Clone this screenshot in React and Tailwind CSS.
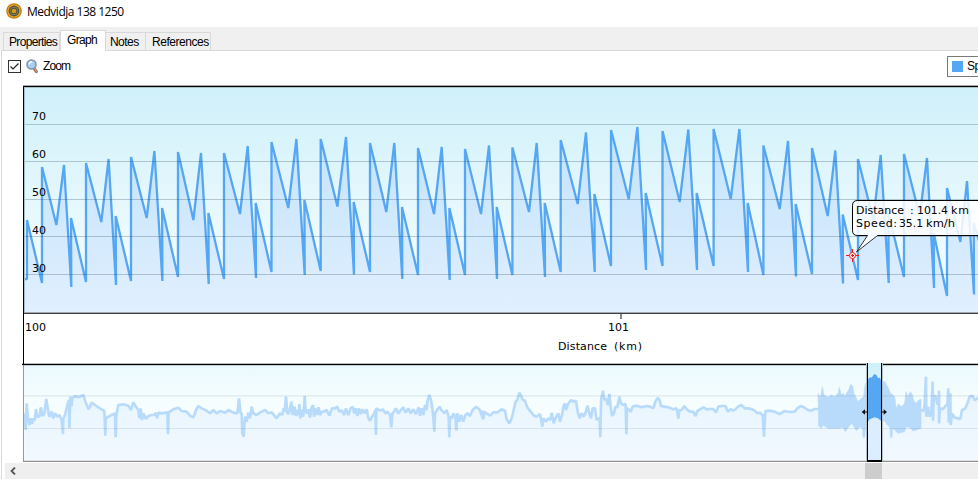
import React, { useState } from 'react';

const TABS = ['Properties', 'Graph', 'Notes', 'References'];

// x, bottom, top, midX, midY, peakX, peakY, dropX, dropY, riseY
const CYCLES = [
  [42, 283, 167, 56.4, 225, 64, 165, 71.3, 287, 218],
  [86, 282, 163, 101.3, 222, 108.6, 159, 116, 285, 216],
  [131, 281, 157, 146.7, 218, 154.4, 151, 162.4, 281, 208],
  [178, 277, 152, 193.4, 220, 201, 153, 208.7, 284, 213],
  [224, 279, 153, 240, 214, 247.7, 146, 256, 278, 203],
  [271.5, 272, 142, 288.3, 208, 296.4, 139, 304.7, 275, 200],
  [320.7, 271, 139, 337.4, 206.5, 346, 137, 354, 274.5, 202],
  [370, 272, 143, 386.3, 212, 394.3, 143, 402.3, 279, 207],
  [418, 275, 148, 434, 214, 441.7, 147, 449.7, 280, 208],
  [465, 275, 149, 481, 214, 489, 145.5, 497, 279, 207],
  [512.4, 275, 147.5, 529, 212, 536.7, 143, 545, 277, 203],
  [560.7, 272, 140, 577.7, 204, 586, 132.5, 594.7, 272, 194],
  [611, 266, 130, 628.7, 199, 637.4, 127, 646, 270, 193],
  [662.5, 266, 131, 679.7, 202, 688.3, 129.5, 697, 270, 193],
  [713.6, 266, 129, 730.7, 199, 739.4, 129, 748, 272, 203],
  [763.4, 275, 145.5, 779.7, 209, 788, 141, 796, 276.5, 204],
  [812, 274, 148, 827.7, 216, 835.3, 150.5, 843, 283.5, 214.5],
  [858, 280, 159, 873.3, 220, 880.7, 155, 888.7, 283, 213],
  [904, 277, 154, 919.7, 216, 927, 158, 934, 288, 233],
  [947, 296, 188, 960.4, 242, 967, 181, 974, 294.5, 223],
];

const speedLine =
  '23,279 27,279 27,220 ' +
  CYCLES.map(([x, yb, yt, mx, my, px, py, dx, dy, ry]) =>
    `${x},${yb} ${x},${yt} ${mx},${my} ${px},${py} ${dx},${dy} ${dx - 0.3},${ry}`
  ).join(' ') +
  ' 980,244';

// overview samples, three units per pixel
const OVERVIEW = [
  { start: 0, points: '73,190 77,240 80,160 84,205 88,225 92,205 96,222 100,205 104,212 108,178 112,200 118,200 123,172 127,198 133,190 139,147 143,175 148,200 155,185 160,205 165,190 172,200 178,195 185,210 189,252 190,205 195,195 202,165 207,150 208,235 211,140 214,170 217,145 225,138 235,142 250,135 256,155 266,178 275,158 285,165 300,175 313,183 316,257 317,205 325,200 335,195 345,190 347,262 349,195 355,165 370,163 385,167 393,180 400,157 408,170 415,180 418,205 422,175 426,210 430,190 438,207 445,198 455,195 463,195 468,188 471,205 476,188 485,190 502,187 504,253 506,187 520,178 535,173 545,183 560,185 570,197 580,203 588,180 595,168 605,175 620,182 630,190 640,180 650,190 660,183 675,188 685,180 700,188 712,190 717,145 722,190 725,190 727,250 731,260 735,200 740,215 745,188' },
  { start: 720, points: '24,190 30,205 35,170 40,190 50,195 60,188 75,180 85,190 95,187 110,205 120,190 127,195 131,175 134,185 138,140 142,190 147,190 154,155 158,195 164,170 168,198 172,180 176,195 178,162 181,205 185,178 190,200 194,138 197,185 202,190 206,178 210,203 214,175 219,165 222,200 226,175 231,195 236,172 240,195 246,185 252,185 260,180 268,197 276,175 285,175 292,170 298,185 305,180 312,195 318,175 325,195 332,175 338,170 343,190 347,175 352,198 357,175 362,192 368,178 373,190 380,178 385,205 390,212 396,200 402,192 406,180 408,255 409,175 420,182 428,178 436,190 443,185 450,195 454,232 457,190 462,185 468,175 475,190 483,180 490,172 497,188 505,175 512,190 520,178 528,192 536,172 540,197 545,175 550,195 555,165 560,180 562,155 568,135 573,150 578,182 583,245 585,190 591,180 598,170 606,182 613,190 620,180 626,200 628,262 630,200 636,205 640,190 646,200 649,242 652,190 658,215 663,195 670,215 676,195 683,190 690,198 698,180 708,170 718,178 725,190 730,208 733,188' },
  { start: 1440, points: '0,182 5,195 9,207 11,185 20,190 30,197 40,187 52,187 65,178 75,182 80,208 88,220 95,205 101,180 107,155 112,150 118,128 124,140 129,150 135,152 142,172 152,185 162,197 170,200 180,192 187,230 190,205 198,215 205,205 211,210 215,188 221,220 226,205 235,190 240,215 246,195 250,170 255,160 258,180 265,160 274,150 280,155 288,152 293,185 299,205 305,190 311,200 318,185 323,167 328,190 333,205 338,175 345,175 350,210 356,205 359,205 361,262 363,150 369,122 373,150 378,145 384,165 388,132 392,170 396,198 402,190 406,170 412,172 418,140 423,160 430,165 437,162 439,253 441,175 446,178 452,185 458,170 470,167 485,172 500,168 510,170 520,175 526,155 533,144 539,150 543,168 555,170 565,172 580,178 590,175 595,206 598,180 605,180 613,168 620,178 630,185 640,185 647,198 652,183 660,178 670,172 680,178 690,177 700,177 708,187 715,170 725,168 737,168 743,185' },
  { start: 2184, points: '8,177 15,182 22,178 30,170 40,165 50,175 60,175 70,177 80,182 88,190 95,188 104,195 108,260 112,183 125,182 140,185 155,192 170,183 185,186 200,185 208,175 218,168 228,172 240,180 250,182 260,177 272,177 580,180 587,183 590,160 594,80 595,200 600,170 605,200 610,190 614,95 615,212 617,140 622,137 628,160 632,165 633,122 633,220 636,175 645,178 652,168 658,165 661,115 662,218 667,130 668,225 672,190 680,203 690,205 697,207 702,180 712,175 720,155 725,140 733,137 740,150 755,142' },
];

const shift = (points, dx) =>
  points.split(' ').map((p) => {
    const [x, y] = p.split(',').map(Number);
    return `${x + dx},${y}`;
  }).join(' ');

const overviewLine = OVERVIEW.map((s) => shift(s.points, s.start)).join(' ');

const denseBand = shift(
  '270,130 275,140 279,135 283,110 288,135 300,142 310,135 320,140 330,130 334,112 340,135 346,130 350,140 358,125 362,120 368,103 374,108 377,130 383,140 390,155 400,145 407,140 410,110 415,95 420,88 424,83 432,82 436,75 440,72 446,76 450,84 456,83 460,93 470,95 480,112 488,130 500,140 505,175 512,162 520,170 530,160 534,125 540,140 547,125 553,135 558,155 565,160 572,150 579,148 579,235 565,240 555,243 545,232 534,230 530,245 510,250 500,240 494,235 492,262 487,262 486,232 478,225 470,213 460,213 450,205 440,202 425,208 417,218 413,230 410,262 405,262 404,235 395,230 385,242 372,220 362,230 352,245 345,232 335,235 300,235 285,225 280,235 272,228',
  2184
);

function AppIcon() {
  return (
    <svg width="16" height="16" viewBox="0 0 16 16">
      <circle cx="8" cy="8" r="7.8" fill="#c07a12" />
      <circle cx="8" cy="8" r="6.6" fill="#f2a51f" />
      <circle cx="8" cy="8" r="5.4" fill="#4f5648" />
      <circle cx="8" cy="8" r="3.9" fill="#8d8a5c" />
      <circle cx="8" cy="8" r="3.2" fill="#4c5242" />
      <circle cx="8" cy="8" r="2.3" fill="#d99a16" />
    </svg>
  );
}

function LensIcon() {
  return (
    <svg width="13" height="15" viewBox="0 0 13 15">
      <path d="M7.5 8.5 L10.4 12.6" stroke="#9a6a48" strokeWidth="3" strokeLinecap="round" />
      <path d="M8.2 9 L10.4 12.2" stroke="#d2a27e" strokeWidth="1.2" strokeLinecap="round" />
      <circle cx="5.5" cy="5.5" r="4.5" fill="#a9d0f2" stroke="#8793a5" strokeWidth="1.6" />
      <path d="M3.2 5.5a2.5 2.5 0 0 1 2.8-2.6" stroke="#f4fbff" strokeWidth="1.6" fill="none" />
    </svg>
  );
}

function SpeedChart() {
  return (
    <svg className="block" width="978" height="279" viewBox="0 84 978 279" fontFamily="'DejaVu Sans', sans-serif" fontSize="11">
      <defs>
        <linearGradient id="sky" x1="0" y1="0" x2="0" y2="1">
          <stop offset="0" stopColor="#cff0fa" />
          <stop offset="1" stopColor="#fbffff" />
        </linearGradient>
        <linearGradient id="area" gradientUnits="userSpaceOnUse" x1="0" y1="127" x2="0" y2="313">
          <stop offset="0" stopColor="#c2e3fb" />
          <stop offset="1" stopColor="#e1efff" />
        </linearGradient>
      </defs>
      <rect x="24" y="87" width="954" height="226" fill="url(#sky)" />
      <polygon points={`23,313 ${speedLine} 980,313`} fill="url(#area)" />
      <polyline points={speedLine} fill="none" stroke="#55a6f3" strokeWidth="2.3" strokeLinejoin="bevel" />
      {[124, 161, 199, 236, 274].map((y) => (
        <rect key={y} x="24" y={y} width="954" height="1" fill="#16384a" opacity="0.25" />
      ))}
      <rect x="23" y="85" width="955" height="1" fill="#a3aaa8" />
      <rect x="23" y="86" width="955" height="1" fill="#000" />
      <rect x="24" y="87" width="954" height="1" fill="#a7c1c8" />
      <rect x="23" y="86" width="1" height="277" fill="#000" />
      <rect x="24" y="87" width="1" height="226" fill="#a5c2cb" />
      <rect x="24" y="312" width="954" height="1" fill="#a3a9b2" />
      <rect x="24" y="313" width="954" height="1" fill="#404040" />
      <rect x="620" y="314" width="2" height="5" fill="#8a8a8a" />
      {[[70, 120], [60, 158], [50, 196], [40, 234], [30, 272]].map(([v, y]) => (
        <text key={v} x="32" y={y} textLength="14" lengthAdjust="spacingAndGlyphs">{v}</text>
      ))}
      <text x="25" y="331" textLength="21" lengthAdjust="spacingAndGlyphs">100</text>
      <text x="608" y="331" textLength="21" lengthAdjust="spacingAndGlyphs">101</text>
      <text x="558" y="350" textLength="49">Distance</text>
      <text x="614" y="350" textLength="28">(km)</text>

      {/* hovered sample */}
      <path
        d="M984 200.5 H857.5 Q852.5 200.5 852.5 205.5 V230.5 Q852.5 235.5 857.5 235.5 H984"
        fill="#fff" fillOpacity="0.85" stroke="#000"
      />
      <path d="M867.5 235.5 L856.5 252 L877.5 235.5" fill="#fbfdff" stroke="#333" />
      <rect x="868" y="235" width="9" height="1" fill="#f6fafe" />
      <text x="856" y="214" textLength="48">Distance</text>
      <text x="910" y="214">:</text>
      <text x="917" y="214" textLength="31" lengthAdjust="spacingAndGlyphs">101.4</text>
      <text x="951" y="214" textLength="18">km</text>
      <text x="856" y="227" textLength="41">Speed:</text>
      <text x="899" y="227" textLength="24" lengthAdjust="spacingAndGlyphs">35.1</text>
      <text x="926" y="227" textLength="29" lengthAdjust="spacingAndGlyphs">km/h</text>
      <g stroke="#f31616">
        <circle cx="852.5" cy="255.5" r="3" fill="#fff" />
        <path d="M846 255.5h3.5 M855.5 255.5h3.5 M852.5 249v3.5 M852.5 258.5v3.5 M851 255.5h3 M852.5 254v3" />
      </g>
    </svg>
  );
}

function OverviewChart() {
  return (
    <svg className="block" width="978" height="100" viewBox="0 39 2934 300">
      <defs>
        <linearGradient id="faded" x1="0" y1="0" x2="0" y2="1">
          <stop offset="0" stopColor="#ebf9fe" />
          <stop offset="0.5" stopColor="#f8feff" />
          <stop offset="1" stopColor="#fbffff" />
        </linearGradient>
        <linearGradient id="fadedArea" gradientUnits="userSpaceOnUse" x1="0" y1="120" x2="0" y2="330">
          <stop offset="0" stopColor="#e7f5fe" />
          <stop offset="1" stopColor="#f2f8ff" />
        </linearGradient>
        <clipPath id="selected">
          <rect x="2604" y="42" width="39" height="288" />
        </clipPath>
      </defs>
      <rect x="72" y="45" width="2862" height="288" fill="url(#faded)" />
      <polygon points={`73,330 ${overviewLine} 2939,330`} fill="url(#fadedArea)" />
      <polyline points={overviewLine} fill="none" stroke="#b9dbfb" strokeWidth="8" strokeLinejoin="bevel" />
      <polygon points={denseBand} fill="#b9dbfb" stroke="#b9dbfb" strokeWidth="2" />
      <rect x="72" y="135" width="2862" height="5" fill="#16384a" opacity="0.07" />
      <rect x="72" y="234" width="2862" height="3" fill="#16384a" opacity="0.1" />
      <rect x="66" y="39" width="2868" height="3" fill="#b9bcbc" />
      <rect x="66" y="42" width="2868" height="3" fill="#000" />
      <rect x="69" y="39" width="3" height="3" fill="#000" />
      <rect x="72" y="45" width="2862" height="3" fill="#c3cbcd" />
      <rect x="69" y="45" width="3" height="291" fill="#999" />
      <rect x="72" y="330" width="2862" height="3" fill="#dce1e6" />
      <rect x="69" y="333" width="2865" height="3" fill="#8f8f8f" />

      {/* selected window */}
      <rect x="2598" y="39" width="51" height="294" fill="#b7c1c5" />
      <rect x="2604" y="39" width="39" height="291" fill="url(#sky)" />
      <g clipPath="url(#selected)">
        <rect x="2604" y="190" width="39" height="140" fill="#dbedff" />
        <polygon points={denseBand} fill="#55a6f3" />
      </g>
      <rect x="2601" y="39" width="3" height="297" fill="#000" />
      <rect x="2643" y="39" width="3" height="297" fill="#000" />
      <rect x="2601" y="330" width="45" height="6" fill="#000" />
      <path d="M2601 186h-9 M2646 186h9" stroke="#111" strokeWidth="3" />
      <path d="M2585 186l10-8v16z M2661 186l-10-8v16z" fill="#111" />
    </svg>
  );
}

export default function App() {
  const [active, setActive] = useState('Graph');
  const [zoom, setZoom] = useState(true);

  const tabStyles = {
    Properties: 'w-[57px] border-l pl-[5px] tracking-[-0.65px]',
    Graph: 'w-[46px] pl-[6px] tracking-[-0.65px]',
    Notes: 'w-[40px] pl-[4px] tracking-[-0.55px]',
    References: 'w-[65px] pl-[6px] tracking-[-0.45px]',
  };

  return (
    <div className="flex h-[481px] w-[978px] flex-col overflow-hidden bg-white font-['Liberation_Sans',sans-serif] text-black">
      <header className="flex h-[27px] shrink-0 items-start gap-[5px] pl-1.5 pt-[3px]">
        <AppIcon />
        <h1 className="font-['Open_Sans',sans-serif] text-[12px] leading-[17px] tracking-[-0.5px] whitespace-nowrap">Medvidja 138 1250</h1>
      </header>

      <nav className="flex h-[23px] shrink-0 items-end bg-[#f0f0f0] pl-[3px]">
        {TABS.map((tab) => (
          <button
            key={tab}
            onClick={() => setActive(tab)}
            className={`flex items-start border-t border-r border-[#d9d9d9] text-[12px] leading-[15px] whitespace-nowrap ${tabStyles[tab]} ${
              active === tab ? 'relative -mb-px h-[21px] border-l bg-white pt-[2px]' : 'h-[18px] pt-[2px]'
            }`}
          >
            {tab}
          </button>
        ))}
      </nav>

      <main className="flex grow flex-col">
        <div className="ml-px flex h-[34px] shrink-0 items-start border-t border-l border-[#d9d9d9]">
          <label className="ml-[6px] mt-[8px] flex items-center">
            <span onClick={() => setZoom(!zoom)} className="flex h-[13px] w-[13px] items-center justify-center border border-[#333]">
              {zoom && (
                <svg width="11" height="11" viewBox="0 0 11 11">
                  <path d="M1.5 5.5 L4 8 L9.5 2.5" fill="none" stroke="#222" strokeWidth="1.2" />
                </svg>
              )}
            </span>
            <span className="ml-[5px]"><LensIcon /></span>
            <span className="ml-[4px] text-[12px] leading-[13px] tracking-[-0.9px]">Zoom</span>
          </label>
          <div className="-mr-[30px] mt-[5px] ml-auto flex h-[21px] w-[61px] shrink-0 items-center gap-1 border border-[#7a7a7a] pl-1">
            <span className="h-[11px] w-[11px] bg-[#55a6f3]" />
            <span className="-mt-px text-[12px] tracking-[-0.4px]">Speed</span>
          </div>
        </div>
        <div className="ml-px border-l border-[#d9d9d9]">
          <div className="-ml-[2px]">
            <SpeedChart />
            <OverviewChart />
          </div>
          <div className="ml-[3px] flex h-4 items-center bg-[#efefef]">
            <svg className="ml-[5px] mr-[849px]" width="6" height="8" viewBox="0 0 6 8">
              <path d="M5 0.5 L1.5 4 L5 7.5" fill="none" stroke="#555" strokeWidth="1.8" />
            </svg>
            <div className="h-4 w-[17px] bg-[#cdcdcd]" />
          </div>
        </div>
      </main>
    </div>
  );
}
